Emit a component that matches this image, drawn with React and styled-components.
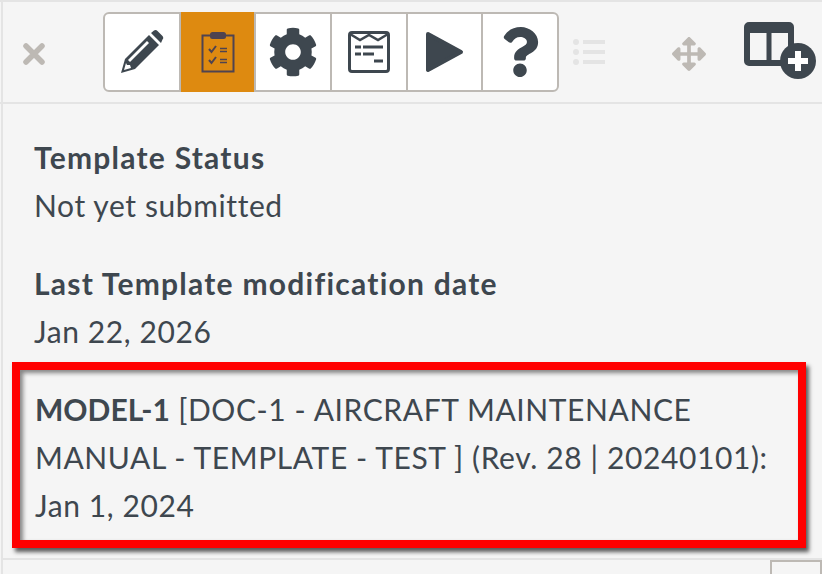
import styled, { createGlobalStyle } from 'styled-components';
import { FaCog, FaQuestion, FaArrowsAlt } from 'react-icons/fa';

const GlobalStyle = createGlobalStyle`
  html, body {
    margin: 0;
    padding: 0;
    width: 822px;
    height: 574px;
    overflow: hidden;
    background: #f5f5f5;
  }
  * { box-sizing: border-box; }
`;

const Page = styled.div`
  width: 822px;
  height: 574px;
  overflow: hidden;
  background: #f5f5f5;
  border-top: 2px solid #e4e4e4;
  padding-left: 3px;
  font-family: Lato, "Noto Sans", sans-serif;
  font-variant-ligatures: none;
  color: #3e474f;
  background-image: linear-gradient(#e4e4e4, #e4e4e4);
  background-size: 2px 100%;
  background-position: 1px 0;
  background-repeat: no-repeat;
`;

const Toolbar = styled.div`
  height: 102px;
  margin-left: -3px;
  padding: 10px 0 10px 22px;
  display: flex;
  align-items: center;
  border-bottom: 2px solid #e4e4e4;
  > * { flex: none; }
`;

const CloseButton = styled.div`
  width: 24px;
  height: 24px;
  margin: 4px 57px 0 0;
  color: #bdb9b4;
  display: flex;
`;

const ButtonGroup = styled.div`
  display: flex;
  height: 80px;
  width: 456px;
  background: #fff;
  border: 2px solid #bdb9b4;
  border-radius: 6px;
`;

const ToolButton = styled.div`
  flex: 1;
  margin: ${(p) => (p.$active ? '-2px 0' : '0')};
  background: ${(p) => (p.$active ? '#de8a10' : 'transparent')};
  border-right: ${(p) => (p.$last ? 'none' : '2px solid #bdb9b4')};
  color: #3e474f;
  display: flex;
  align-items: center;
  justify-content: center;
  font-size: 50px;
`;

const ListIcon = styled.div`
  width: 34px;
  height: 26px;
  margin-left: 14px;
  margin-right: 65px;
  color: #e4e4e4;
  display: flex;
`;

const MoveIcon = styled.div`
  color: #bdb9b4;
  font-size: 34px;
  display: flex;
  margin: 4px 38px 0 0;
`;

const AddLayout = styled.div`
  width: 74px;
  height: 58px;
  margin-top: -3px;
  display: flex;
`;

const Content = styled.div`
  padding: 29px 0 0 31px;
  font-size: 30px;
  line-height: 48px;
  letter-spacing: 0.6px;
`;

const Field = styled.div`
  margin-bottom: 30px;
`;

const FieldLabel = styled.div`
  font-weight: 700;
  letter-spacing: 1.25px;
`;

const ModelName = styled.b`
  letter-spacing: 0;
`;

const Highlight = styled.div`
  width: 794px;
  height: 186px;
  margin: -23px 0 0 -22px;
  padding: 15px 12px 0 15px;
  border: 8px solid #ff0000;
  box-shadow: 3px 4px 4px rgba(40, 40, 40, 0.75), inset 3px 3px 4px rgba(40, 40, 40, 0.55);
`;

const FooterBar = styled.div`
  height: 14px;
  margin: 10px 0 0 -31px;
  border-top: 2px solid #e4e4e4;
  display: flex;
  justify-content: flex-end;
`;

const FooterBox = styled.div`
  width: 52px;
  height: 20px;
  border: 2px solid #bdb9b4;
`;

export default function App() {
  return (
    <>
      <GlobalStyle />
      <Page>
        <Toolbar>
          <CloseButton>
            <svg viewBox="0 0 24 24" width="24" height="24">
              <path d="M4 4 L20 20 M20 4 L4 20" stroke="currentColor" strokeWidth="5.5" strokeLinecap="round" />
            </svg>
          </CloseButton>
          <ButtonGroup>
            <ToolButton>
              <svg viewBox="0 0 44 44" width="44" height="44">
                <path fill="currentColor" fillRule="evenodd" d="M1 43 L5 29 L29 5 L39 15 L15 39 Z M8 30 L27 11 L29 13 L10 32 Z M6 33 L4 40 L11 38 L10 35 L7 35 Z M31 3 L34 0.5 Q36 -0.5 37.5 1 L42.5 6 Q44 8 42.5 9.5 L41 13 Z" />
              </svg>
            </ToolButton>
            <ToolButton $active>
              <svg viewBox="0 0 34 42" width="34" height="42">
                <rect x="1.5" y="4.5" width="31" height="36" fill="none" stroke="#4f4350" strokeWidth="2" />
                <rect x="9" y="1" width="16" height="7" rx="2.5" fill="#4f4350" />
                <path d="M8 18 L10.5 21 L15 15 M8 29 L10.5 32 L15 26" fill="none" stroke="#4f4350" strokeWidth="2" />
                <path d="M19 17.5 H26 M19 20.5 H26 M19 28.5 H26 M19 31.5 H26" stroke="#4f4350" strokeWidth="1.7" />
              </svg>
            </ToolButton>
            <ToolButton>
              <FaCog />
            </ToolButton>
            <ToolButton>
              <svg viewBox="0 0 42 42" width="42" height="42">
                <rect x="1.5" y="1.5" width="39" height="39" rx="2.5" fill="none" stroke="currentColor" strokeWidth="3" />
                <path d="M2 3 L12 9 L21 4 L30 9 L40 3" fill="none" stroke="currentColor" strokeWidth="2.5" />
                <path d="M7 16 H13 M15 16 H35 M7 23 H13 M15 23 H26 M26 30 H35" stroke="currentColor" strokeWidth="3" />
              </svg>
            </ToolButton>
            <ToolButton>
              <svg viewBox="0 0 38 44" width="38" height="44">
                <path fill="currentColor" stroke="currentColor" strokeWidth="4" strokeLinejoin="round" d="M2 4 L35 22 L2 40 Z" />
              </svg>
            </ToolButton>
            <ToolButton $last>
              <FaQuestion />
            </ToolButton>
          </ButtonGroup>
          <ListIcon>
            <svg viewBox="0 0 34 26" width="34" height="26">
              <g fill="currentColor">
                <circle cx="3" cy="3" r="3" />
                <circle cx="3" cy="13" r="3" />
                <circle cx="3" cy="23" r="3" />
                <rect x="10" y="1" width="22" height="4" />
                <rect x="10" y="11" width="22" height="4" />
                <rect x="10" y="21" width="22" height="4" />
              </g>
            </svg>
          </ListIcon>
          <MoveIcon>
            <FaArrowsAlt />
          </MoveIcon>
          <AddLayout>
            <svg viewBox="0 0 74 58" width="74" height="58">
              <rect x="3" y="3" width="44" height="38" rx="2" fill="none" stroke="#3e474f" strokeWidth="6" />
              <rect x="3" y="3" width="44" height="8" fill="#3e474f" />
              <rect x="22.5" y="8" width="5" height="32" fill="#3e474f" />
              <circle cx="54" cy="39" r="18" fill="#3e474f" />
              <path d="M54 29 V49 M44 39 H64" stroke="#fff" strokeWidth="6" />
            </svg>
          </AddLayout>
        </Toolbar>
        <Content>
          <Field>
            <FieldLabel>Template Status</FieldLabel>
            <div>Not yet submitted</div>
          </Field>
          <Field>
            <FieldLabel>Last Template modification date</FieldLabel>
            <div>Jan 22, 2026</div>
          </Field>
          <Highlight>
            <ModelName>MODEL-1</ModelName> [DOC-1 - AIRCRAFT MAINTENANCE MANUAL - TEMPLATE - TEST ] (Rev. 28 | 20240101): Jan 1, 2024
          </Highlight>
          <FooterBar>
            <FooterBox />
          </FooterBar>
        </Content>
      </Page>
    </>
  );
}
